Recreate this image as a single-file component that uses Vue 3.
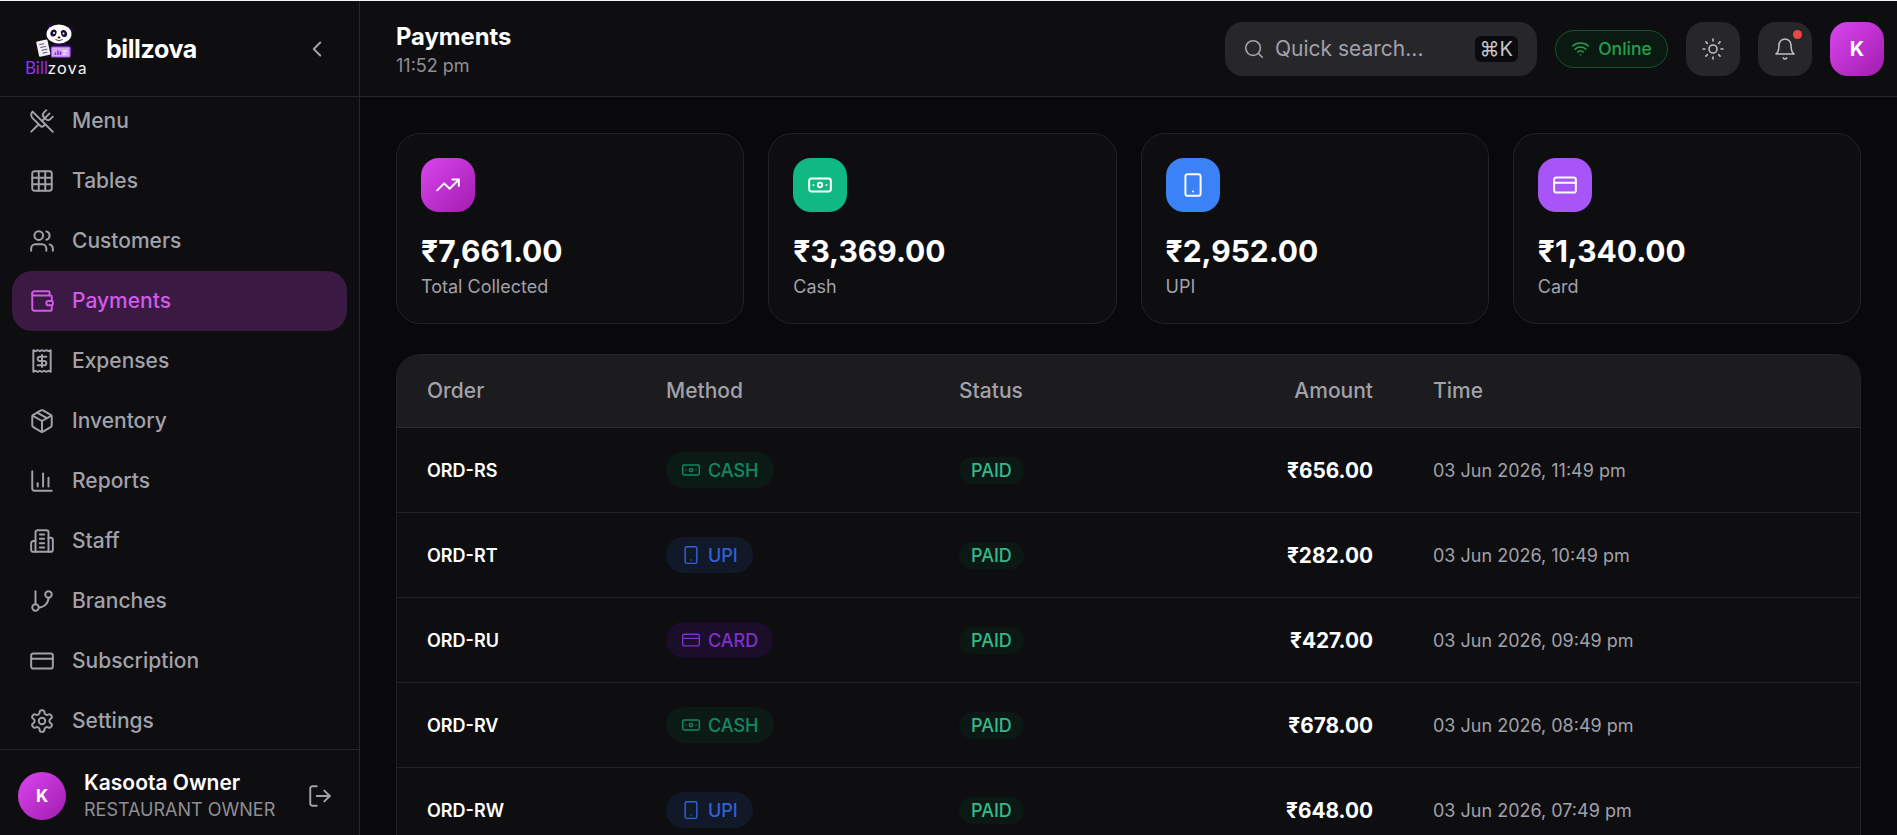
<script setup>
import { h } from 'vue'

const circ = (x, y, r) => `M${x - r} ${y}a${r} ${r} 0 1 0 ${r * 2} 0a${r} ${r} 0 1 0 ${-r * 2} 0`
const box = (x, y, w, h2, r) =>
  `M${x + r} ${y}h${w - 2 * r}a${r} ${r} 0 0 1 ${r} ${r}v${h2 - 2 * r}a${r} ${r} 0 0 1 ${-r} ${r}h${-(w - 2 * r)}a${r} ${r} 0 0 1 ${-r} ${-r}v${-(h2 - 2 * r)}a${r} ${r} 0 0 1 ${r} ${-r}z`

const icons = {
  menu: ['m16 2-2.3 2.3a3 3 0 0 0 0 4.2l1.8 1.8a3 3 0 0 0 4.2 0L22 8', 'M15 15 3.3 3.3a4.2 4.2 0 0 0 0 6l7.3 7.3c.7.7 2 .7 2.8 0L15 15Zm0 0 7 7', 'm2.1 21.8 6.4-6.3', 'm19 5-7 7'],
  tables: [box(3, 3, 18, 18, 2), 'M3 9h18', 'M3 15h18', 'M9 3v18', 'M15 3v18'],
  users: ['M16 21v-2a4 4 0 0 0-4-4H6a4 4 0 0 0-4 4v2', circ(9, 7, 4), 'M22 21v-2a4 4 0 0 0-3-3.87', 'M16 3.13a4 4 0 0 1 0 7.75'],
  wallet: ['M19 7V4a1 1 0 0 0-1-1H5a2 2 0 0 0 0 4h15a1 1 0 0 1 1 1v4h-3a2 2 0 0 0 0 4h3a1 1 0 0 0 1-1v-2a1 1 0 0 0-1-1', 'M3 5v14a2 2 0 0 0 2 2h15a1 1 0 0 0 1-1v-4'],
  receipt: ['M4 2v20l2-1 2 1 2-1 2 1 2-1 2 1 2-1 2 1V2l-2 1-2-1-2 1-2-1-2 1-2-1-2 1Z', 'M16 8h-6a2 2 0 1 0 0 4h4a2 2 0 1 1 0 4H8', 'M12 17.5v-11'],
  box: ['M21 8a2 2 0 0 0-1-1.73l-7-4a2 2 0 0 0-2 0l-7 4A2 2 0 0 0 3 8v8a2 2 0 0 0 1 1.73l7 4a2 2 0 0 0 2 0l7-4A2 2 0 0 0 21 16Z', 'm3.3 7 8.7 5 8.7-5', 'M12 22V12', 'm7.5 4.27 9 5.15'],
  chart: ['M3 3v16a2 2 0 0 0 2 2h16', 'M18 17V9', 'M13 17V5', 'M8 17v-3'],
  building: ['M6 22V4a2 2 0 0 1 2-2h8a2 2 0 0 1 2 2v18Z', 'M6 12H4a2 2 0 0 0-2 2v6a2 2 0 0 0 2 2h2', 'M18 9h2a2 2 0 0 1 2 2v9a2 2 0 0 1-2 2h-2', 'M10 6h4', 'M10 10h4', 'M10 14h4', 'M10 18h4'],
  branch: ['M6 3v12', circ(18, 6, 3), circ(6, 18, 3), 'M18 9a9 9 0 0 1-9 9'],
  card: [box(2, 5, 20, 14, 2), 'M2 10h20'],
  gear: ['M12.22 2h-.44a2 2 0 0 0-2 2v.18a2 2 0 0 1-1 1.73l-.43.25a2 2 0 0 1-2 0l-.15-.08a2 2 0 0 0-2.73.73l-.22.38a2 2 0 0 0 .73 2.73l.15.1a2 2 0 0 1 1 1.72v.51a2 2 0 0 1-1 1.74l-.15.09a2 2 0 0 0-.73 2.73l.22.38a2 2 0 0 0 2.73.73l.15-.08a2 2 0 0 1 2 0l.43.25a2 2 0 0 1 1 1.73V20a2 2 0 0 0 2 2h.44a2 2 0 0 0 2-2v-.18a2 2 0 0 1 1-1.73l.43-.25a2 2 0 0 1 2 0l.15.08a2 2 0 0 0 2.73-.73l.22-.39a2 2 0 0 0-.73-2.73l-.15-.08a2 2 0 0 1-1-1.74v-.5a2 2 0 0 1 1-1.74l.15-.09a2 2 0 0 0 .73-2.73l-.22-.38a2 2 0 0 0-2.73-.73l-.15.08a2 2 0 0 1-2 0l-.43-.25a2 2 0 0 1-1-1.73V4a2 2 0 0 0-2-2z', circ(12, 12, 3)],
  logout: ['M9 21H5a2 2 0 0 1-2-2V5a2 2 0 0 1 2-2h4', 'm16 17 5-5-5-5', 'M21 12H9'],
  chevron: ['m15 18-6-6 6-6'],
  search: [circ(11, 11, 8), 'm21 21-4.3-4.3'],
  wifi: ['M12 20h.01', 'M2 8.82a15 15 0 0 1 20 0', 'M5 12.859a10 10 0 0 1 14 0', 'M8.5 16.429a5 5 0 0 1 7 0'],
  sun: [circ(12, 12, 4), 'M12 2v2', 'M12 20v2', 'm4.93 4.93 1.41 1.41', 'm17.66 17.66 1.41 1.41', 'M2 12h2', 'M20 12h2', 'm6.34 17.66-1.41 1.41', 'm19.07 4.93-1.41 1.41'],
  bell: ['M6 8a6 6 0 0 1 12 0c0 7 3 9 3 9H3s3-2 3-9', 'M10.3 21a1.94 1.94 0 0 0 3.4 0'],
  trend: ['M22 7 13.5 15.5 8.5 10.5 2 17', 'M16 7h6v6'],
  cash: [box(2, 6, 20, 12, 2), circ(12, 12, 2), 'M6 12h.01M18 12h.01'],
  phone: [box(5, 2, 14, 20, 2), 'M12 18h.01'],
}

const Ico = (props) =>
  h(
    'svg',
    {
      viewBox: '0 0 24 24',
      width: props.size || 26,
      height: props.size || 26,
      fill: 'none',
      stroke: 'currentColor',
      'stroke-width': props.sw || 1.8,
      'stroke-linecap': 'round',
      'stroke-linejoin': 'round',
    },
    icons[props.name].map((d) => h('path', { d })),
  )
Ico.props = ['name', 'size', 'sw']

const nav = [
  { label: 'Menu', icon: 'menu' },
  { label: 'Tables', icon: 'tables' },
  { label: 'Customers', icon: 'users' },
  { label: 'Payments', icon: 'wallet', active: true },
  { label: 'Expenses', icon: 'receipt' },
  { label: 'Inventory', icon: 'box' },
  { label: 'Reports', icon: 'chart' },
  { label: 'Staff', icon: 'building' },
  { label: 'Branches', icon: 'branch' },
  { label: 'Subscription', icon: 'card' },
  { label: 'Settings', icon: 'gear' },
]

const stats = [
  { value: '₹7,661.00', label: 'Total Collected', icon: 'trend', tone: 'fuchsia' },
  { value: '₹3,369.00', label: 'Cash', icon: 'cash', tone: 'green' },
  { value: '₹2,952.00', label: 'UPI', icon: 'phone', tone: 'blue' },
  { value: '₹1,340.00', label: 'Card', icon: 'card', tone: 'purple' },
]

const methods = {
  CASH: { icon: 'cash', tone: 'm-cash' },
  UPI: { icon: 'phone', tone: 'm-upi' },
  CARD: { icon: 'card', tone: 'm-card' },
}

const rows = [
  { order: 'ORD-RS', method: 'CASH', amount: '₹656.00', time: '03 Jun 2026, 11:49 pm' },
  { order: 'ORD-RT', method: 'UPI', amount: '₹282.00', time: '03 Jun 2026, 10:49 pm' },
  { order: 'ORD-RU', method: 'CARD', amount: '₹427.00', time: '03 Jun 2026, 09:49 pm' },
  { order: 'ORD-RV', method: 'CASH', amount: '₹678.00', time: '03 Jun 2026, 08:49 pm' },
  { order: 'ORD-RW', method: 'UPI', amount: '₹648.00', time: '03 Jun 2026, 07:49 pm' },
]
</script>

<template>
  <div class="app">
    <aside class="sidebar">
      <div class="brand">
        <div class="logo">
          <svg class="panda" viewBox="0 0 63 38" width="63" height="38">
            <ellipse cx="36" cy="27" rx="12" ry="8" fill="#1d0c38" />
            <circle cx="25.5" cy="3.5" r="3.5" fill="#1d0c38" />
            <circle cx="45" cy="7" r="3.5" fill="#1d0c38" />
            <ellipse cx="34" cy="11" rx="12.5" ry="9.5" fill="#fff" />
            <ellipse cx="28.5" cy="10" rx="3" ry="3.6" fill="#1d0c38" transform="rotate(20 28.5 10)" />
            <ellipse cx="39" cy="10.5" rx="3" ry="3.6" fill="#1d0c38" transform="rotate(-20 39 10.5)" />
            <circle cx="29" cy="10" r="1" fill="#fff" />
            <circle cx="38.5" cy="10.5" r="1" fill="#fff" />
            <ellipse cx="34" cy="14.5" rx="1.4" ry="1" fill="#1d0c38" />
            <path d="M30.5 16.5q3.5 2.5 7 0" fill="none" stroke="#1d0c38" stroke-width=".8" />
            <rect x="12.5" y="17.5" width="11.5" height="15.5" rx="1" fill="#f1eef6" transform="rotate(-12 18 25)" />
            <path d="M15 21h5M15.5 24h6M16 27h6M16.5 30h5" stroke="#5b4a78" stroke-width=".9" transform="rotate(-12 18 25)" />
            <rect x="26.5" y="24" width="18.5" height="10" rx="1" fill="#d9a8f5" stroke="#a855f7" stroke-width="1.2" />
            <path d="M30.5 32v-2.5M33 32v-4.5M35.5 32v-3.5" stroke="#6d28d9" stroke-width="1.4" />
            <path d="M38 28h4M38 31h3" stroke="#fff" stroke-width="1.2" />
          </svg>
          <div class="wordmark"><span class="bill">Bill</span><span class="zova">zova</span></div>
        </div>
        <span class="brand-name">billzova</span>
        <Ico name="chevron" :size="26" class="collapse" />
      </div>
      <nav class="nav">
        <div class="nav-list">
          <a v-for="item in nav" :key="item.label" class="nav-item" :class="{ active: item.active }">
            <Ico :name="item.icon" :size="26" />
            <span>{{ item.label }}</span>
          </a>
        </div>
      </nav>
      <div class="user">
        <div class="user-avatar">K</div>
        <div class="user-text">
          <div class="user-name">Kasoota Owner</div>
          <div class="user-role">RESTAURANT OWNER</div>
        </div>
        <Ico name="logout" :size="26" class="logout" />
      </div>
    </aside>

    <div class="content">
      <header class="topbar">
        <div class="title-block">
          <div class="title">Payments</div>
          <div class="clock">11:52 pm</div>
        </div>
        <div class="top-actions">
          <div class="search">
            <Ico name="search" :size="22" />
            <span class="search-text">Quick search...</span>
            <kbd class="kbd">⌘K</kbd>
          </div>
          <div class="online">
            <Ico name="wifi" :size="19" />
            <span>Online</span>
          </div>
          <div class="round-btn"><Ico name="sun" :size="24" :sw="1.6" /></div>
          <div class="round-btn bell">
            <Ico name="bell" :size="24" :sw="1.6" />
            <i class="dot"></i>
          </div>
          <div class="top-avatar">K</div>
        </div>
      </header>

      <main class="main">
        <section class="stats">
          <div v-for="s in stats" :key="s.label" class="stat">
            <div class="stat-icon" :class="s.tone"><Ico :name="s.icon" :size="26" /></div>
            <div class="stat-value">{{ s.value }}</div>
            <div class="stat-label">{{ s.label }}</div>
          </div>
        </section>

        <section class="table">
          <div class="tr head">
            <div>Order</div>
            <div>Method</div>
            <div>Status</div>
            <div class="right">Amount</div>
            <div>Time</div>
          </div>
          <div v-for="r in rows" :key="r.order" class="tr">
            <div class="order">{{ r.order }}</div>
            <div>
              <span class="method" :class="methods[r.method].tone">
                <Ico :name="methods[r.method].icon" :size="20" :sw="1.7" />
                {{ r.method }}
              </span>
            </div>
            <div><span class="paid">PAID</span></div>
            <div class="right amount">{{ r.amount }}</div>
            <div class="time">{{ r.time }}</div>
          </div>
        </section>
      </main>
    </div>
  </div>
</template>

<style>
html,
body {
  margin: 0;
  height: 100%;
  overflow: hidden;
  background: #f4f4f5;
}
</style>

<style scoped>
.app {
  display: flex;
  height: 834px;
  margin-top: 1px;
  font-family: Inter, 'Noto Sans', 'DejaVu Sans', sans-serif;
  background: #09090b;
  color: #fff;
  overflow: hidden;
}
.sidebar {
  width: 360px;
  flex: none;
  box-sizing: border-box;
  display: flex;
  flex-direction: column;
  background: #0e0e11;
  border-right: 1px solid #27272a;
}
.brand {
  height: 96px;
  flex: none;
  box-sizing: border-box;
  display: flex;
  align-items: center;
  padding-left: 25px;
  border-bottom: 1px solid #27272a;
}
.logo {
  width: 63px;
  display: flex;
  flex-direction: column;
}
.panda {
  display: block;
}
.wordmark {
  font-family: Lato, sans-serif;
  font-size: 17px;
  line-height: 14px;
  white-space: nowrap;
}
.bill {
  color: #9333ea;
}
.zova {
  color: #f4f4f5;
  letter-spacing: 1.5px;
}
.brand-name {
  margin-left: 18px;
  font-size: 25px;
  font-weight: 700;
  letter-spacing: -0.4px;
}
.collapse {
  margin-left: auto;
  margin-right: 29px;
  color: #a1a1aa;
}
.nav {
  flex: 1;
  min-height: 0;
  overflow: hidden;
}
.nav-list {
  display: flex;
  flex-direction: column;
  margin-top: -6px;
  padding: 0 12px;
}
.nav-item {
  height: 60px;
  flex: none;
  display: flex;
  align-items: center;
  gap: 17px;
  padding-left: 17px;
  border-radius: 20px;
  color: #a1a1aa;
  font-size: 21px;
  font-weight: 500;
}
.nav-item span {
  margin-top: -1px;
}
.nav-item.active {
  background: #3a1a42;
  color: #d35ae8;
}
.user {
  height: 86px;
  flex: none;
  box-sizing: border-box;
  display: flex;
  align-items: center;
  padding: 6px 26px 0 18px;
  border-top: 1px solid #27272a;
}
.user-avatar {
  width: 48px;
  height: 48px;
  flex: none;
  border-radius: 50%;
  display: grid;
  place-items: center;
  font-size: 17px;
  font-weight: 700;
  background: linear-gradient(135deg, #d946ef, #a21caf);
}
.user-text {
  margin-left: 18px;
}
.user-name {
  font-size: 21px;
  font-weight: 600;
  line-height: 27px;
}
.user-role {
  font-size: 18px;
  line-height: 27px;
  color: #8e8e94;
}
.logout {
  margin-left: auto;
  color: #a1a1aa;
}
.content {
  flex: 1;
  min-width: 0;
  display: flex;
  flex-direction: column;
}
.topbar {
  height: 96px;
  flex: none;
  box-sizing: border-box;
  display: flex;
  align-items: center;
  justify-content: space-between;
  padding: 0 13px 0 36px;
  background: #0e0e11;
  border-bottom: 1px solid #27272a;
}
.title-block {
  padding-top: 2px;
}
.title {
  font-size: 23.8px;
  font-weight: 700;
  line-height: 30px;
}
.clock {
  margin-top: 2px;
  font-size: 18px;
  line-height: 24px;
  color: #8e8e94;
}
.top-actions {
  display: flex;
  align-items: center;
  gap: 18px;
}
.search {
  width: 312px;
  height: 54px;
  box-sizing: border-box;
  display: flex;
  align-items: center;
  padding: 0 19px 0 18px;
  border-radius: 18px;
  background: #27272a;
  color: #a1a1aa;
}
.search-text {
  margin-left: 10px;
  font-size: 21px;
}
.kbd {
  margin-left: auto;
  height: 26px;
  padding: 0 5px;
  border-radius: 6px;
  background: #0b0b0d;
  color: #c4c4c8;
  font-family: Inter, 'DejaVu Sans', sans-serif;
  font-size: 20px;
  line-height: 26px;
}
.online {
  height: 38px;
  width: 113px;
  box-sizing: border-box;
  display: flex;
  align-items: center;
  justify-content: center;
  gap: 8px;
  border-radius: 19px;
  border: 1px solid #14532d;
  background: #0b1a10;
  color: #22a04f;
  font-size: 17.5px;
  font-weight: 500;
}
.round-btn {
  position: relative;
  width: 54px;
  height: 54px;
  display: grid;
  place-items: center;
  border-radius: 18px;
  background: #27272a;
  color: #bdbdc2;
}
.dot {
  position: absolute;
  top: 8px;
  right: 10px;
  width: 9px;
  height: 9px;
  border-radius: 50%;
  background: #ef4444;
}
.top-avatar {
  width: 54px;
  height: 54px;
  display: grid;
  place-items: center;
  border-radius: 18px;
  font-size: 20px;
  font-weight: 700;
  background: linear-gradient(135deg, #d946ef, #a21caf);
}
.main {
  flex: 1;
  min-height: 0;
  overflow: hidden;
  padding: 36px 35px 0 36px;
  margin-right: 1px;
  background: #09090b;
}
.stats {
  display: grid;
  grid-template-columns: repeat(4, 1fr);
  gap: 24px;
}
.stat {
  height: 191px;
  box-sizing: border-box;
  padding: 24px;
  border-radius: 24px;
  border: 1px solid #232326;
  background: #0e0e11;
}
.stat-icon {
  width: 54px;
  height: 54px;
  display: grid;
  place-items: center;
  border-radius: 18px;
}
.fuchsia {
  background: linear-gradient(135deg, #d946ef, #a21caf);
}
.green {
  background: #10b981;
}
.blue {
  background: #3b82f6;
}
.purple {
  background: #a855f7;
}
.stat-value {
  margin-top: 21px;
  font-size: 30px;
  line-height: 36px;
  font-weight: 700;
}
.stat-label {
  margin-top: 6px;
  font-size: 18px;
  line-height: 24px;
  color: #a1a1aa;
}
.table {
  margin-top: 30px;
  border: 1px solid #232326;
  border-bottom: 0;
  border-radius: 24px 24px 0 0;
  background: #0e0e11;
  overflow: hidden;
}
.tr {
  height: 85px;
  box-sizing: border-box;
  display: grid;
  grid-template-columns: 239px 293px 301px 173px 1fr;
  align-items: center;
  border-bottom: 1px solid #232326;
}
.tr > div {
  padding: 0 30px;
  min-width: 0;
}
.head {
  height: 73px;
  padding-bottom: 1px;
  background: #1c1c1f;
  color: #a1a1aa;
  font-size: 21px;
  font-weight: 500;
  border-bottom-color: #2c2c30;
}
.right {
  text-align: right;
}
.tr .right {
  padding: 0 30px 0 0;
}
.order {
  font-size: 18px;
  font-weight: 600;
}
.method {
  display: inline-flex;
  align-items: center;
  gap: 7px;
  height: 36px;
  padding: 0 15px;
  border-radius: 18px;
  font-size: 18px;
  font-weight: 500;
}
.m-cash {
  background: #0b1a14;
  color: #0f8a63;
}
.m-upi {
  background: #111828;
  color: #2f62d6;
}
.m-card {
  background: #1b0e2a;
  color: #7c32c8;
}
.paid {
  display: inline-flex;
  align-items: center;
  height: 27px;
  padding: 0 12px;
  border-radius: 14px;
  background: #0b1814;
  color: #34b98a;
  font-size: 18px;
  font-weight: 500;
}
.amount {
  font-size: 20.8px;
  font-weight: 700;
}
.time {
  font-size: 18px;
  color: #a1a1aa;
  white-space: nowrap;
}
</style>
